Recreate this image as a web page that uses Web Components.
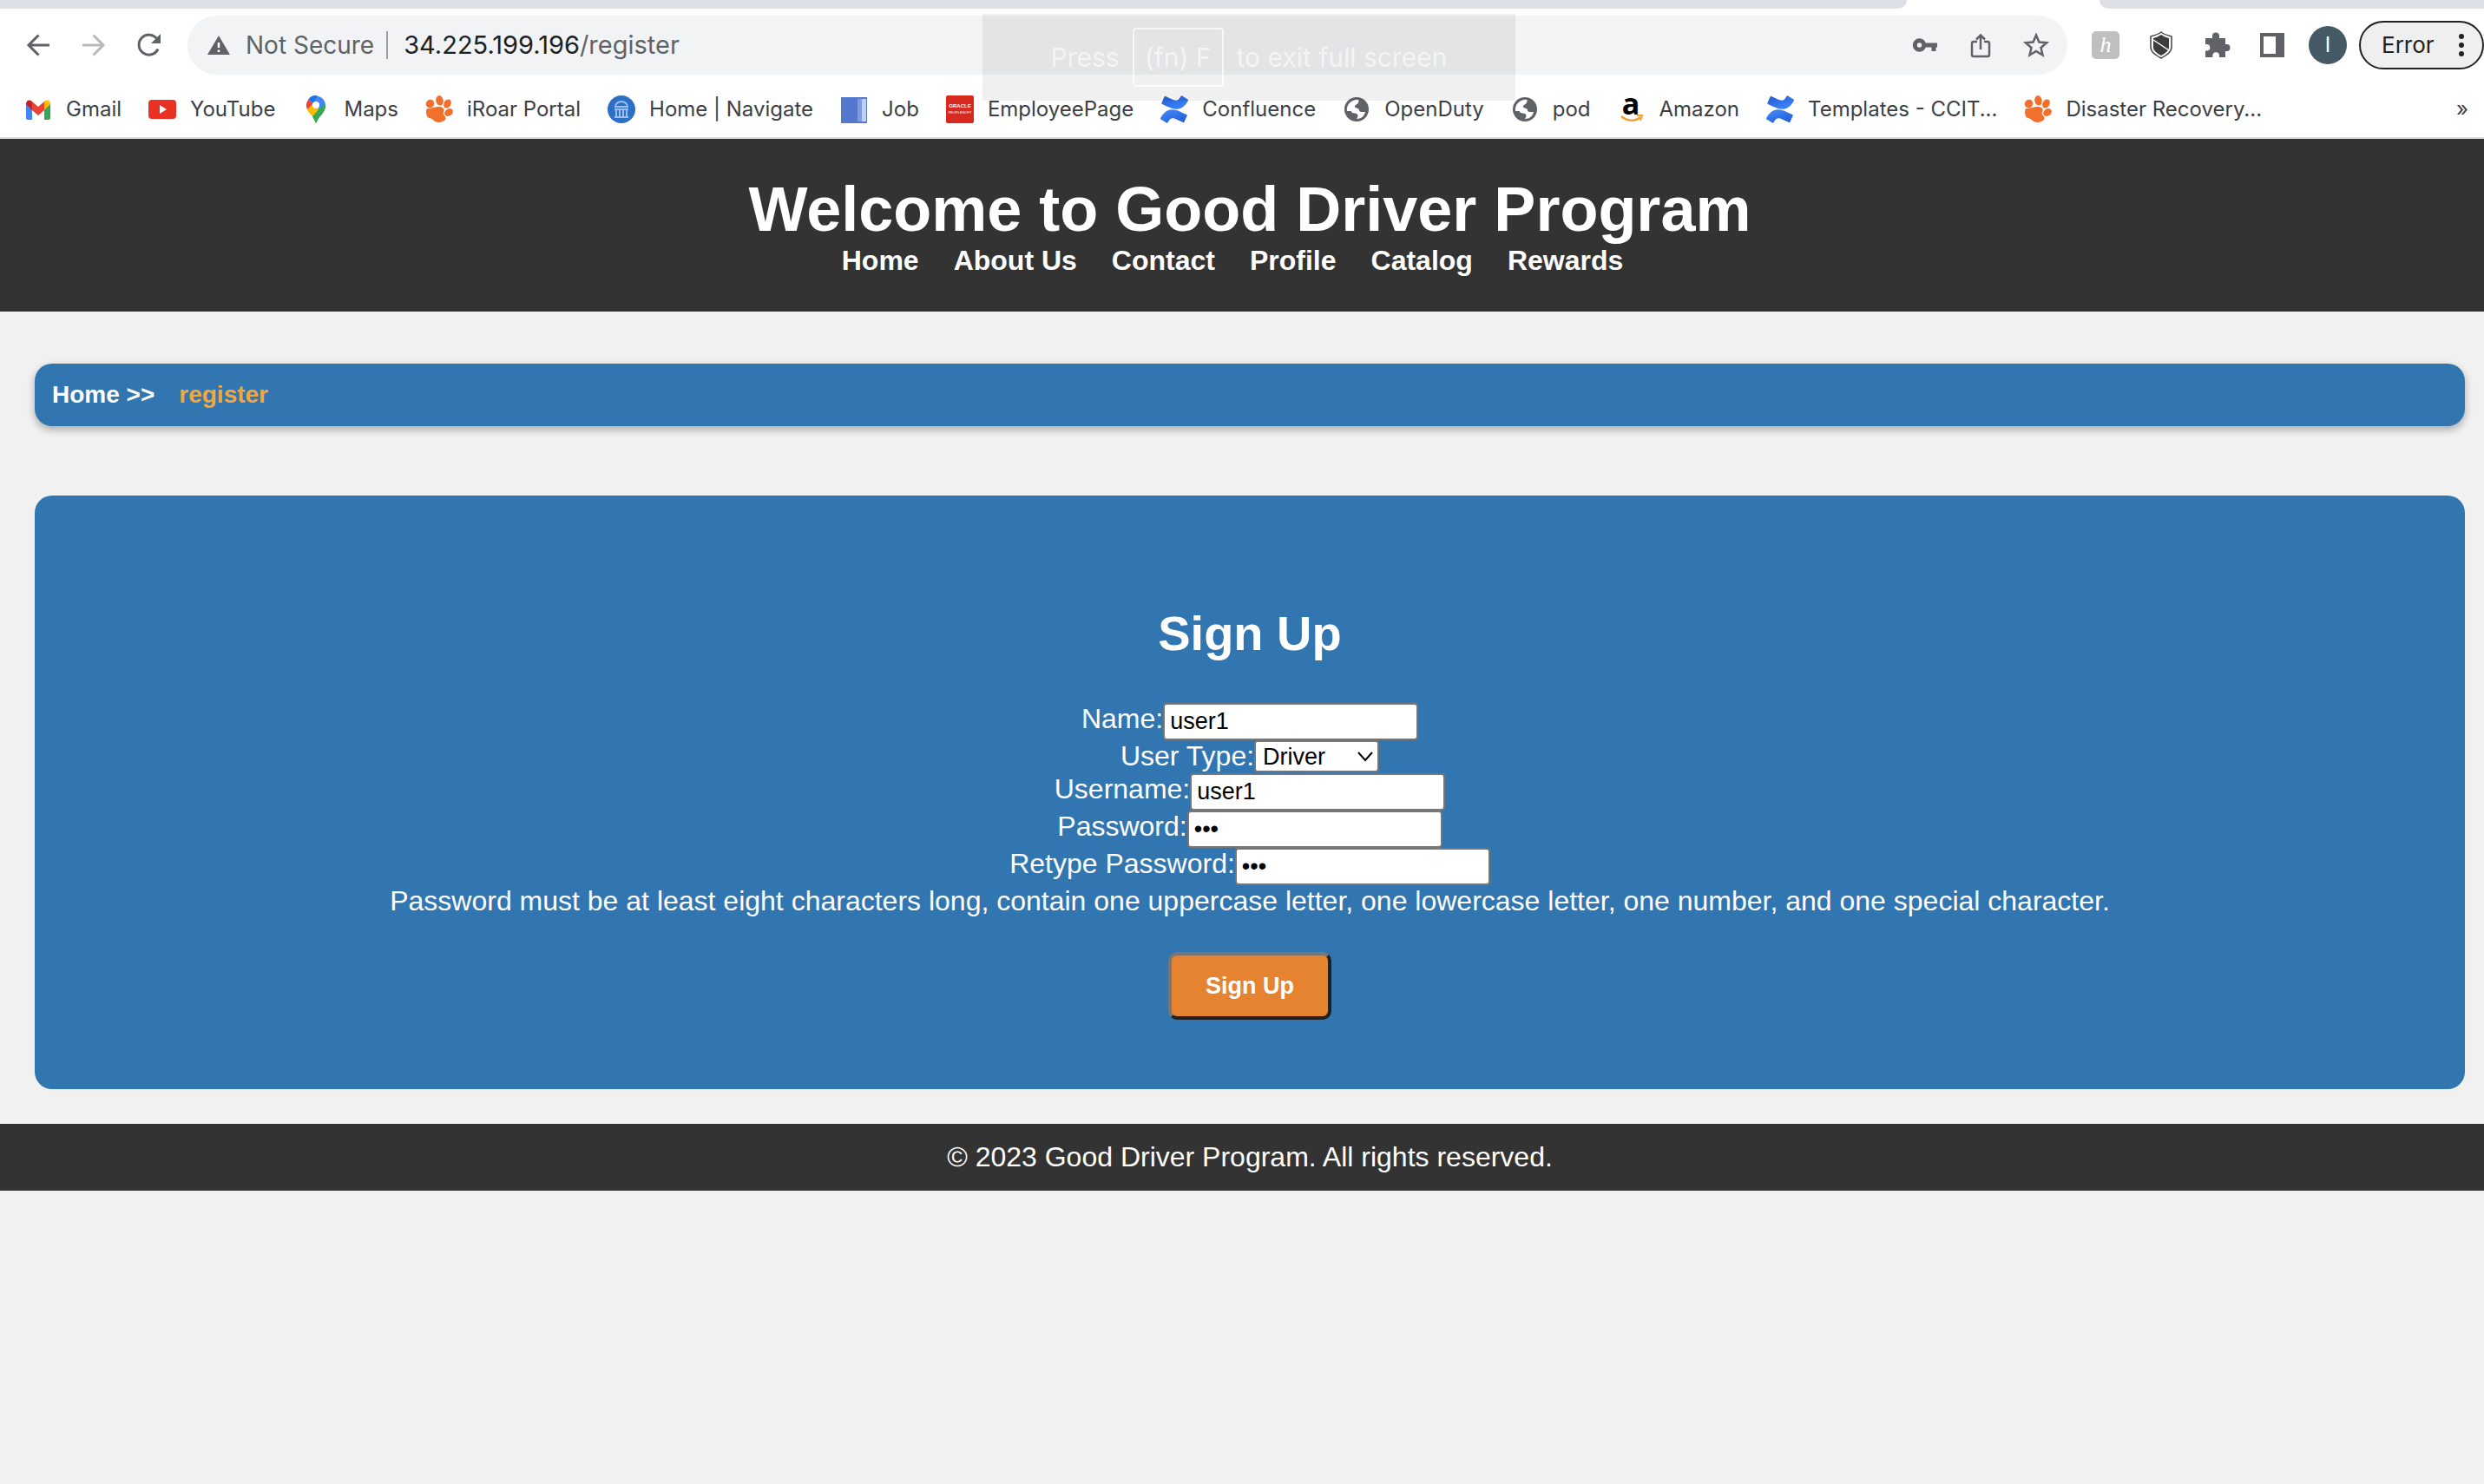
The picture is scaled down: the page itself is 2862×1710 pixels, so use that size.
<!DOCTYPE html>
<html lang="en">
<head>
<meta charset="utf-8">
<title>Good Driver Program - Register</title>
<style>
html, body { margin: 0; min-height: 100%; background: #f1f1f1; }
body { font-family: Arial, "Liberation Sans", sans-serif; font-size: 32px; line-height: 37px; color: #fff; overflow-x: hidden; }
</style>
</head>
<body>
<browser-bar></browser-bar>
<site-header heading="Welcome to Good Driver Program">
  <a href="#home">Home</a><a href="#about">About Us</a><a href="#contact">Contact</a><a href="#profile">Profile</a><a href="#catalog">Catalog</a><a href="#rewards">Rewards</a>
</site-header>
<bread-crumb><a href="#home">Home &gt;&gt;</a><span slot="current">register</span></bread-crumb>
<signup-panel></signup-panel>
<site-footer>© 2023 Good Driver Program. All rights reserved.</site-footer>

<script>
function define(name, html) {
  const template = document.createElement('template');
  template.innerHTML = html;
  customElements.define(name, class extends HTMLElement {
    constructor() {
      super();
      this.attachShadow({ mode: 'open' }).append(template.content.cloneNode(true));
    }
    connectedCallback() {
      const h = this.shadowRoot.querySelector('[data-heading]');
      if (h) h.textContent = this.getAttribute('heading');
    }
  });
}

const ICONS = {
  gmail: `<path fill="#4285f4" d="M2 9l7 6v13H4a2 2 0 0 1-2-2z"/><path fill="#34a853" d="M30 9l-7 6v13h5a2 2 0 0 0 2-2z"/><path fill="#fbbc04" d="M23 7c4-3 7-1 7 3l-7 7z"/><path fill="#c5221f" d="M9 7C5 4 2 6 2 10l7 7z"/><path fill="#ea4335" d="M9 7l7 6 7-6v10l-7 6-7-6z"/>`,
  youtube: `<rect y="5" width="32" height="22" rx="4" fill="#e93223"/><path fill="#fff" d="M13 11l8 5-8 5z"/>`,
  maps: `<path fill="#34a853" d="M27 10c1 5-2 9-5 13-3 3-4 5-6 9-1-4-3-6-4-8z"/><path fill="#fbbc04" d="M6 16L12 7l9 7-9 10c-2-2-5-5-6-8z"/><path fill="#ea4335" d="M7 5l6 4-7 7C4 12 5 8 7 5z"/><path fill="#1a73e8" d="M7 5c3-5 8-6 12-4l-6 8z"/><path fill="#4285f4" d="M19 1c4 1 7 4 8 9l-9 11 2-12-7 0z"/><path fill="#34a853" d="M27 10c0 6-4 11-8 16l-3 6-4-8 8-9z"/><circle cx="16" cy="11" r="4" fill="#fff"/>`,
  paw: `<g fill="#f26f2c"><ellipse cx="5.500" cy="9.500" rx="5" ry="4.600" transform="rotate(-35 5.500 9.500)"/><ellipse cx="16.500" cy="5.800" rx="4.200" ry="5.800" transform="rotate(-12 16.500 5.800)"/><ellipse cx="25.500" cy="9.500" rx="4" ry="5.400" transform="rotate(30 25.500 9.500)"/><ellipse cx="27" cy="19.500" rx="5.200" ry="4" transform="rotate(-35 27 19.500)"/><path d="M1 18c0-4 4-3 8-4 5-1 10-2 12 1 2 2-1 4 0 7 1 2 4 3 2 6-2 2-5 3-8 3-4 0-6-4-10-5-3 0-4-4-4-8z"/></g>`,
  navigate: `<circle cx="16" cy="16" r="16" fill="#2d6fc7"/><g fill="none" stroke="#9cc1ee" stroke-width="2"><path d="M9 13a7 6 0 0 1 14 0zM8 16h16M10 16v8M14 16v8M18 16v8M22 16v8M8 25h16"/></g>`,
  job: `<path fill="#5578cf" d="M1 2h30v30H1z"/><path fill="#7f9be0" d="M20 4h5v26h-5z"/><path fill="#c0cff3" d="M25 4h5v26h-5z"/>`,
  oracle: `<rect width="32" height="32" rx="2" fill="#d8291e"/><g fill="#fff" font-family="Liberation Sans, sans-serif" text-anchor="middle"><text x="16" y="14" font-size="6" font-weight="700">ORACLE</text><text x="16" y="21" font-size="4">PEOPLESOFT</text></g>`,
  confluence: `<defs><linearGradient id="lo" x1="1" y1="1" x2=".3" y2="0"><stop offset="0" stop-color="#2059d0"/><stop offset="1" stop-color="#3f86fb"/></linearGradient><linearGradient id="hi" x1="0" y1="0" x2=".7" y2="1"><stop offset="0" stop-color="#2059d0"/><stop offset="1" stop-color="#3f86fb"/></linearGradient></defs><g transform="scale(1.3333)"><path fill="url(#lo)" d="M.87 18.257c-.248.382-.53.875-.763 1.245a.764.764 0 0 0 .255 1.04l4.965 3.054a.764.764 0 0 0 1.058-.26c.199-.332.454-.763.733-1.221 1.967-3.247 3.945-2.853 7.508-1.146l4.957 2.337a.764.764 0 0 0 1.028-.382l2.364-5.346a.764.764 0 0 0-.382-1c-1.030-.484-3.099-1.460-4.957-2.362C11.020 10.990 5.257 11.204.87 18.257z"/><path fill="url(#hi)" d="M23.131 5.743c.249-.405.531-.875.764-1.250a.764.764 0 0 0-.256-1.034L18.675.404a.764.764 0 0 0-1.058.26c-.195.335-.451.763-.734 1.225-1.966 3.246-3.945 2.850-7.508 1.146L4.437.694a.764.764 0 0 0-1.027.382L1.046 6.422a.764.764 0 0 0 .382 1c1.030.484 3.098 1.460 4.957 2.362 6.617 3.215 12.380 2.993 16.746-4.041z"/></g>`,
  globe: `<circle cx="16" cy="16" r="14" fill="#5f6368"/><path fill="#fff" d="M15 5c4-1 4 1 3 3-1 3-4 2-4 5 0 2 5 1 5 4 0 2 2 2 5 2h2c-1 5-5 8-10 8 2-3 2-5 0-6-3-1-6 0-6-3H5C4 11 9 6 15 5z"/>`,
  amazon: `<text x="15" y="22" text-anchor="middle" font-family="Open Sans, sans-serif" font-weight="700" font-size="34">a</text><path d="M4 24c7 6 16 6 22 1" fill="none" stroke="#f5a02c" stroke-width="2.500"/><path d="M22 23h6l-2 6" fill="none" stroke="#f5a02c" stroke-width="2"/>`,
  back: `<g fill="none" stroke="#5f6368" stroke-width="3"><path d="M29 16H5M16.500 4.500L5 16l11.500 11.500"/></g>`,
  forward: `<g fill="none" stroke="#bababc" stroke-width="3"><path d="M3 16h24M15.500 4.500L27 16 15.500 27.500"/></g>`,
  reload: `<path d="M26 20.500A11.500 11.500 0 1 1 25 9" fill="none" stroke="#5f6368" stroke-width="3"/><path fill="#5f6368" d="M29 3v11H18z"/>`,
  warning: `<path fill="#5f6368" d="M16 5l13 22H3z"/><path stroke="#fff" stroke-width="2.500" d="M16 13v6M16 21.500v2.500"/>`,
  key: `<g fill="none" stroke="#5f6368" stroke-width="5"><circle cx="9.500" cy="16" r="5.200"/><path d="M16 16h14M26 16v7"/></g>`,
  share: `<g fill="none" stroke="#5f6368" stroke-width="2.500"><path d="M12 12H8q-2 0-2 2v13q0 2 2 2h16q2 0 2-2V14q0-2-2-2h-4M16 21V5M11 9.500l5-5 5 5"/></g>`,
  star: `<path d="M16 4.500l3.400 8 8.700.8-6.600 5.700 2 8.500L16 23l-7.500 4.500 2-8.500-6.600-5.700 8.700-.8z" fill="none" stroke="#5f6368" stroke-width="2.500"/>`,
  honey: `<rect width="32" height="32" rx="5" fill="#bfbfbf"/><text x="16" y="24" text-anchor="middle" font-family="Liberation Serif, serif" font-style="italic" font-size="26" fill="#fff">h</text>`,
  shield: `<path fill="#fff" stroke="#444" stroke-width="1.500" d="M16 1c4 3 8 4 12 5v12c0 6-5 9-12 13C9 27 4 24 4 18V6c4-1 8-2 12-5z"/><path fill="#3d3d3d" d="M16 4c3 2 6 3 9 4v10c0 5-4 7-9 10-5-3-9-5-9-10V8c3-1 6-2 9-4z"/><path stroke="#fff" stroke-width="1.500" d="M7 10l18 12"/>`,
  puzzle: `<path fill="#5f6368" d="M3 8h8V5.500a4 4 0 0 1 8 0V8h7v7h1.500a4 4 0 0 1 0 8H26v7h-7v-2a3.800 3.800 0 0 0-7.600 0v2H3v-7.500h1.500a3.800 3.800 0 0 0 0-7.600H3z"/>`,
  panel: `<path fill="#5f6368" fill-rule="evenodd" d="M2 2h28v28H2zM6 6v20h14V6z"/>`,
};

customElements.define('ui-icon', class extends HTMLElement {
  connectedCallback() {
    if (this.shadowRoot) return;
    this.attachShadow({ mode: 'open' }).innerHTML =
      `<style>:host{display:block;flex:none;width:32px;height:32px}svg{display:block;overflow:visible}</style><svg width="32" height="32" viewBox="0 0 32 32" aria-hidden="true">${ICONS[this.getAttribute('name')]}</svg>`;
  }
});

define('book-mark', `
<style>
:host { display: block; flex: none; }
a { display: flex; align-items: center; gap: 16px; color: inherit; text-decoration: none; white-space: nowrap; }
</style>
<a href="#"><slot name="icon"></slot><span><slot></slot></span></a>`);

const bookmarks = [['gmail','Gmail'],['youtube','YouTube'],['maps','Maps'],['paw','iRoar Portal'],['navigate','Home | Navigate'],['job','Job'],['oracle','EmployeePage'],['confluence','Confluence'],['globe','OpenDuty'],['globe','pod'],['amazon','Amazon'],['confluence','Templates - CCIT...'],['paw','Disaster Recovery...']]
  .map(([i, t]) => `<book-mark><ui-icon slot="icon" name="${i}"></ui-icon>${t}</book-mark>`).join('');

define('browser-bar', `
<style>
:host { display: block; position: relative; background: #fff; border-bottom: 2px solid #dadedc; font-family: Inter, sans-serif; color: #3c4043; }
button { font: inherit; color: inherit; border: 0; padding: 0; background: none; display: block; }
.tabs { display: flex; height: 10px; gap: 222px; }
.tabs i { background: #dee0e5; }
.tabs i:first-child { flex: 1; border-bottom-right-radius: 10px; }
.tabs i:last-child { width: 443px; border-bottom-left-radius: 10px; }
.toolbar { display: flex; align-items: center; padding: 8px 0 8px 28px; font-size: 28px; line-height: 36px; }
.nav { display: flex; gap: 32px; margin-right: 28px; }
.omni { flex: 1; display: flex; align-items: center; height: 68px; box-sizing: border-box; padding: 0 20px; border-radius: 34px; background: #f1f3f4; color: #5f6368; }
.omni .label { margin-left: 15px; }
.sep { width: 2px; height: 32px; margin: 0 18px 0 14px; background: #9aa0a6; }
.url { flex: 1; font-size: 29px; }
.url b { font-weight: 400; color: #202124; }
.actions, .ext { display: flex; align-items: center; gap: 32px; }
.ext { margin: 0 26px 0 28px; }
.avatar { display: flex; align-items: center; justify-content: center; width: 44px; height: 44px; border-radius: 50%; background: #455a64; color: #fff; font-size: 24px; }
.error { display: flex; align-items: center; justify-content: space-between; box-sizing: border-box; width: 144px; height: 56px; margin-left: 14px; padding: 0 20px 0 24px; border: 2px solid #202124; border-radius: 28px; background: #efefef; color: #202124; font-size: 26px; }
.marks { display: flex; align-items: center; gap: 31px; height: 64px; padding: 0 18px 0 28px; font-size: 24px; line-height: 30px; }
.more { margin-left: auto; }
.hint { position: absolute; top: 16px; left: 1132px; display: flex; align-items: center; justify-content: center; gap: 15px; box-sizing: border-box; width: 614px; height: 100px; background: rgba(0,0,0,.06); color: rgba(255,255,255,.6); font-size: 30px; line-height: 36px; white-space: nowrap; }
.hint kbd { font: inherit; box-sizing: border-box; height: 68px; padding: 14px 12px; border: 2px solid rgba(255,255,255,.7); border-radius: 4px; }
</style>
<div class="tabs"><i></i><i></i></div>
<div class="toolbar">
  <div class="nav">
    <button aria-label="Back"><ui-icon name="back"></ui-icon></button>
    <button aria-label="Forward"><ui-icon name="forward"></ui-icon></button>
    <button aria-label="Reload"><ui-icon name="reload"></ui-icon></button>
  </div>
  <div class="omni">
    <ui-icon name="warning"></ui-icon><span class="label">Not Secure</span><span class="sep"></span>
    <span class="url"><b>34.225.199.196</b>/register</span>
    <div class="actions">
      <button aria-label="Passwords"><ui-icon name="key"></ui-icon></button>
      <button aria-label="Share"><ui-icon name="share"></ui-icon></button>
      <button aria-label="Bookmark"><ui-icon name="star"></ui-icon></button>
    </div>
  </div>
  <div class="ext">
    <button aria-label="Honey"><ui-icon name="honey"></ui-icon></button>
    <button aria-label="Shield"><ui-icon name="shield"></ui-icon></button>
    <button aria-label="Extensions"><ui-icon name="puzzle"></ui-icon></button>
    <button aria-label="Side panel"><ui-icon name="panel"></ui-icon></button>
  </div>
  <button class="avatar">I</button>
  <button class="error">Error<svg width="8" height="28" viewBox="0 0 8 28" fill="#202124" aria-hidden="true"><circle cx="4" cy="4" r="3"/><circle cx="4" cy="14" r="3"/><circle cx="4" cy="24" r="3"/></svg></button>
</div>
<div class="marks">${bookmarks}<button class="more">»</button></div>
<div class="hint"><span>Press</span><kbd>(fn) F</kbd><span>to exit full screen</span></div>`);

define('site-header', `
<style>
:host { display: block; padding: 40px 0 40px 18px; background: #333; text-align: center; }
h1 { margin: 0; font-size: 72px; line-height: 82px; }
nav { display: flex; justify-content: center; font-weight: 700; }
::slotted(a) { color: #fff; text-decoration: none; margin-right: 40px; }
</style>
<h1 data-heading></h1>
<nav><slot></slot></nav>`);

define('bread-crumb', `
<style>
:host { display: flex; gap: 28px; margin: 60px 22px 80px 40px; padding: 20px; border-radius: 20px; background: #3176b1; box-shadow: 0 4px 10px rgba(0,0,0,.3); font-size: 28px; line-height: 32px; font-weight: 700; }
::slotted(a) { color: #fff; text-decoration: none; }
.current { color: #f2a63b; }
</style>
<slot></slot><span class="current"><slot name="current"></slot></span>`);

define('signup-panel', `
<style>
:host { display: block; margin: 0 22px 40px 40px; padding: 80px; border-radius: 20px; background: #3176b1; text-align: center; }
h2 { margin: 47px 0 48px; font-size: 56px; line-height: 64px; }
.row { display: flex; justify-content: center; }
input, select { box-sizing: border-box; height: 43px; margin: 0; border: 2px solid #767676; border-radius: 4px; background: #fff; color: #000; font-family: inherit; font-size: 27px; }
input { width: 294px; padding: 2px 6px; }
.pick { display: grid; align-items: center; justify-items: end; margin-bottom: 1px; }
.pick > * { grid-area: 1 / 1; }
.pick svg { margin-right: 6px; pointer-events: none; z-index: 1; }
select { appearance: none; width: 144px; height: 37px; padding: 0 8px; }
button { margin-top: 40px; padding: 19px 39px; border: 4px solid; border-color: #767676 #212121 #212121 #767676; border-radius: 10px; background: #e68331; color: #fff; font: 700 27px/32px "Liberation Sans", sans-serif; }
p { margin: 0; }
</style>
<h2>Sign Up</h2>
<form>
  <div class="row"><label for="name">Name:</label><input id="name" type="text" value="user1"></div>
  <div class="row"><label for="type">User Type:</label><span class="pick"><select id="type"><option>Driver</option><option>Sponsor</option></select><svg width="20" height="12" viewBox="0 0 20 12" fill="none" stroke="#000" stroke-width="2" aria-hidden="true"><path d="M2 1l8 9 8-9"/></svg></span></div>
  <div class="row"><label for="user">Username:</label><input id="user" type="text" value="user1"></div>
  <div class="row"><label for="pass">Password:</label><input id="pass" type="password" value="abc"></div>
  <div class="row"><label for="again">Retype Password:</label><input id="again" type="password" value="abc"></div>
  <p>Password must be at least eight characters long, contain one uppercase letter, one lowercase letter, one number, and one special character.</p>
  <button type="button">Sign Up</button>
</form>`);

define('site-footer', `
<style>:host { display: block; padding: 20px 0 20px 18px; background: #333; text-align: center; }</style>
<slot></slot>`);
</script>
</body>
</html>
